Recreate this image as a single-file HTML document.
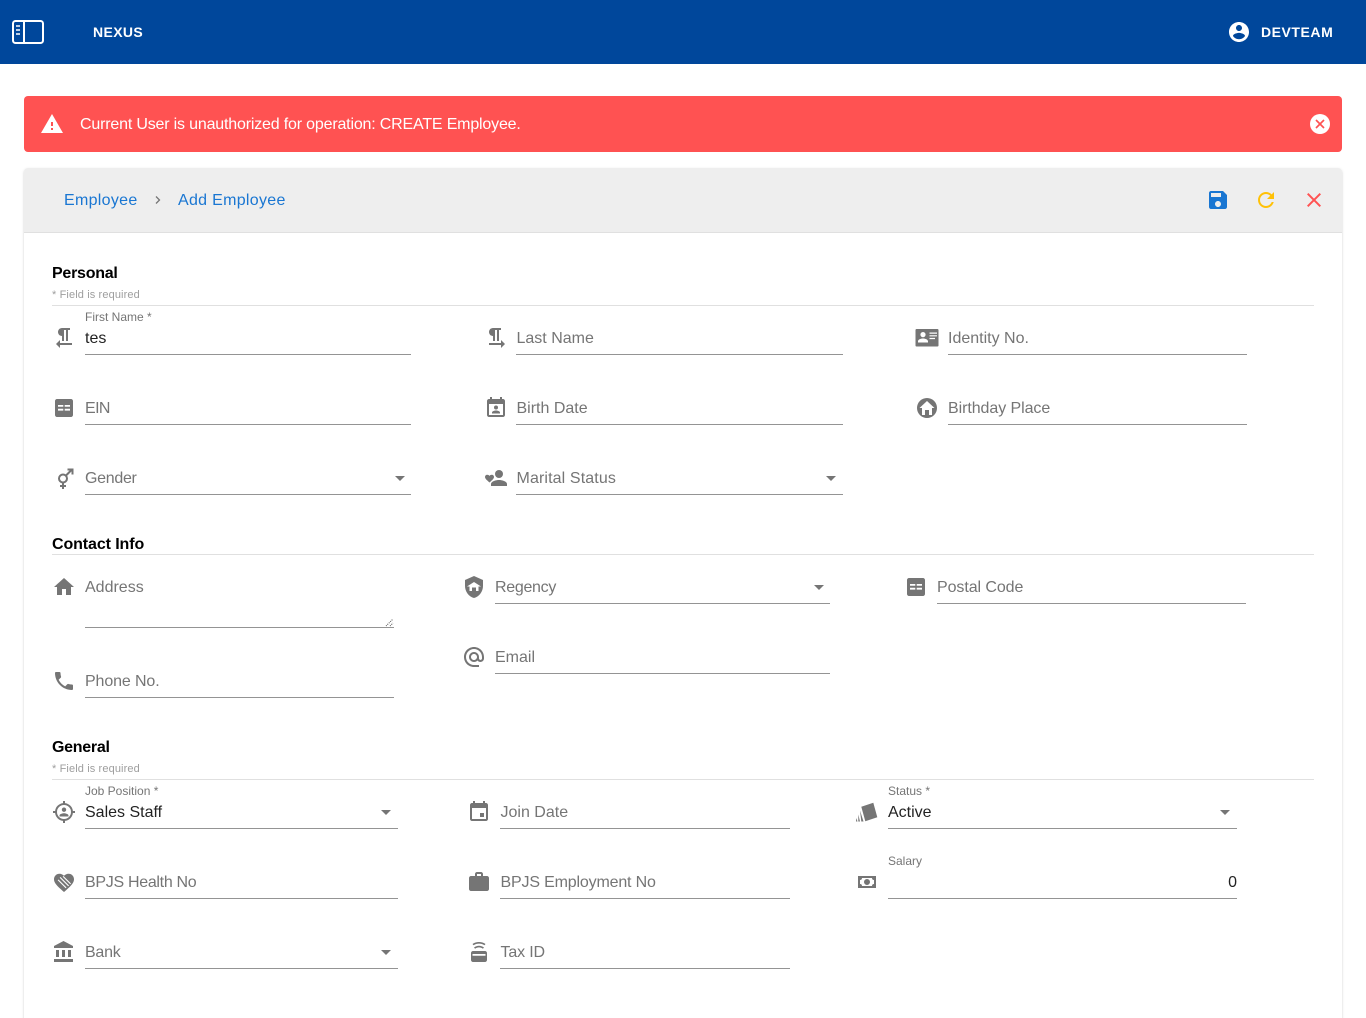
<!DOCTYPE html>
<html><head><meta charset="utf-8"><style>
html,body{margin:0;padding:0;background:#fff}
#p{position:relative;width:1366px;height:1018px;overflow:hidden;font-family:"Liberation Sans",sans-serif;background:#fff}
.t{position:absolute;font-size:16px;line-height:20px;white-space:nowrap;color:#757575}
.v{color:rgba(0,0,0,.87)}
.l{font-size:12px;line-height:14px;color:#757575}
.h{font-weight:bold;color:#000}
.q{font-size:11px;line-height:14px;color:#9e9e9e;letter-spacing:.12px}
.u{position:absolute;height:1px;background:#949494}
.d{position:absolute;left:52px;width:1262px;height:1px;background:#e0e0e0}
.a{position:absolute;width:0;height:0;border-left:5px solid transparent;border-right:5px solid transparent;border-top:5px solid #757575}
svg.i{position:absolute;width:24px;height:24px;fill:#757575}
</style></head><body><div id="p">
<div style="position:absolute;left:0;top:0;width:1366px;height:64px;background:#00479b"></div>
<svg style="position:absolute;left:12px;top:20px" width="32" height="24" viewBox="0 0 32 24" fill="none" stroke="#fff" stroke-width="2"><rect x="1" y="1" width="30" height="22" rx="2.500"/><path d="M12 1v22"/><path d="M4 6h4M4 10h4M4 14h4" stroke-width="1.500"/></svg>
<div class="t" style="left:93px;top:22px;font-size:14px;font-weight:bold;color:#fff;letter-spacing:.38px">NEXUS</div>
<svg class="i" style="left:1227px;top:20px;fill:#fff" viewBox="0 0 24 24"><path d="M12 2C6.480 2 2 6.480 2 12s4.480 10 10 10 10-4.480 10-10S17.520 2 12 2zm0 3c1.660 0 3 1.340 3 3s-1.340 3-3 3-3-1.340-3-3 1.340-3 3-3zm0 14.200c-2.500 0-4.710-1.280-6-3.220.03-1.990 4-3.080 6-3.080 1.990 0 5.970 1.090 6 3.080-1.290 1.940-3.500 3.220-6 3.220z"/></svg>
<div class="t" style="left:1261px;top:22px;font-size:14px;font-weight:bold;color:#fff;letter-spacing:.55px">DEVTEAM</div>

<div style="position:absolute;left:24px;top:96px;width:1318px;height:56px;background:#ff5252;border-radius:4px"></div>
<svg class="i" style="left:40px;top:112px;fill:#fff" viewBox="0 0 24 24"><path d="M1 21h22L12 2 1 21zm12-3h-2v-2h2v2zm0-4h-2v-4h2v4z"/></svg>
<div class="t" style="left:80px;top:115px;color:#fff;letter-spacing:-.18px">Current User is unauthorized for operation: CREATE Employee.</div>
<svg class="i" style="left:1308px;top:112px" viewBox="0 0 24 24"><circle cx="12" cy="12" r="10" fill="#fff"/><path d="M8 8l8 8M16 8l-8 8" stroke="#ff5252" stroke-width="1.700" fill="none"/></svg>

<div style="position:absolute;left:24px;top:168px;width:1318px;height:860px;background:#fff;border-radius:4px;box-shadow:0 2px 1px -1px rgba(0,0,0,.2),0 1px 1px 0 rgba(0,0,0,.14),0 1px 3px 0 rgba(0,0,0,.12)"></div>
<div style="position:absolute;left:24px;top:168px;width:1318px;height:64px;background:#eee;border-radius:4px 4px 0 0;border-bottom:1px solid #e0e0e0"></div>
<div class="t" style="left:64px;top:191px;color:#1976d2;letter-spacing:.3px">Employee</div>
<svg style="position:absolute;left:153px;top:195px" width="10" height="10" viewBox="0 0 10 10" fill="none" stroke="#757575" stroke-width="1.300"><path d="M3 1.500L6.500 5 3 8.500"/></svg>
<div class="t" style="left:178px;top:191px;color:#1976d2;letter-spacing:.3px">Add Employee</div>
<svg class="i" style="left:1206px;top:188px;fill:#1976d2" viewBox="0 0 24 24"><path d="M17 3H5c-1.110 0-2 .9-2 2v14c0 1.100.89 2 2 2h14c1.100 0 2-.9 2-2V7l-4-4zm-5 16c-1.660 0-3-1.340-3-3s1.340-3 3-3 3 1.340 3 3-1.340 3-3 3zm3-10H5V5h10v4z"/></svg>
<svg class="i" style="left:1254px;top:188px;fill:#ffc107" viewBox="0 0 24 24"><path d="M17.650 6.350C16.200 4.900 14.210 4 12 4c-4.420 0-7.990 3.580-7.990 8s3.570 8 7.990 8c3.730 0 6.840-2.550 7.730-6h-2.080c-.82 2.330-3.040 4-5.650 4-3.310 0-6-2.690-6-6s2.690-6 6-6c1.660 0 3.140.69 4.220 1.780L13 11h7V4l-2.350 2.350z"/></svg>
<svg class="i" style="left:1302px;top:188px;fill:#ff5252" viewBox="0 0 24 24"><path d="M19 6.410L17.590 5 12 10.590 6.410 5 5 6.410 10.590 12 5 17.590 6.410 19 12 13.410 17.590 19 19 17.590 13.410 12z"/></svg>

<div class="t h" style="left:52px;top:264px;letter-spacing:-.25px">Personal</div>
<div class="t q" style="left:52px;top:288px">* Field is required</div>
<div class="d" style="top:305px"></div>

<svg class="i" style="left:52px;top:326px" viewBox="0 0 24 24"><path d="M10 10v5h2V4h2v11h2V4h2V2h-8C7.790 2 6 3.790 6 6s1.790 4 4 4zm-2 7v-3l-4 4 4 4v-3h12v-2H8z"/></svg>
<div class="t l" style="left:85px;top:310px">First Name *</div>
<div class="t v" style="left:85px;top:329px">tes</div>
<div class="u" style="left:85px;top:354px;width:326px"></div>

<svg class="i" style="left:483.500px;top:326px" viewBox="0 0 24 24"><path d="M9 10v5h2V4h2v11h2V4h2V2H9C6.790 2 5 3.790 5 6s1.790 4 4 4zm12 8l-4-4v3H5v2h12v3l4-4z"/></svg>
<div class="t" style="left:516.500px;top:329px">Last Name</div>
<div class="u" style="left:516px;top:354px;width:327px"></div>

<svg class="i" style="left:915px;top:326px;width:24px" viewBox="0 0 24 24"><path fill-rule="evenodd" d="M1.500 3h21c.6 0 1 .5 1 1v15.500c0 .6-.4 1-1 1h-21c-.6 0-1-.4-1-1V4c0-.5.4-1 1-1zM8 6a2.600 2.600 0 1 0 0 5.200A2.600 2.600 0 0 0 8 6zm-5 10.500h10v-1.300c0-1.800-3.300-2.700-5-2.700s-5 .9-5 2.700zM14.500 6.500v1.200H22V6.500zm0 2.700v1.200H22V9.200zm0 2.700v1.200H20v-1.200z"/></svg>
<div class="t" style="left:948px;top:329px">Identity No.</div>
<div class="u" style="left:948px;top:354px;width:299px"></div>

<svg class="i" style="left:52px;top:396px" viewBox="0 0 24 24"><path fill-rule="evenodd" d="M5 3h14c1.100 0 2 .9 2 2v14c0 1.100-.9 2-2 2H5c-1.100 0-2-.9-2-2V5c0-1.100.9-2 2-2zm1 6v1.800h5.300V9zm6.700 0v1.800H18V9zM6 12.800v1.800h5.300v-1.800zm6.700 0v1.800H18v-1.800z"/></svg>
<div class="t" style="left:85px;top:399px;letter-spacing:-.6px">EIN</div>
<div class="u" style="left:85px;top:424px;width:326px"></div>

<svg class="i" style="left:483.500px;top:396px" viewBox="0 0 24 24"><path d="M19 3h-1V1h-2v2H8V1H6v2H5c-1.110 0-2 .9-2 2v14c0 1.100.89 2 2 2h14c1.100 0 2-.9 2-2V5c0-1.100-.9-2-2-2zm0 16H5V8h14zM12 9.500a2 2 0 1 1 0 4 2 2 0 0 1 0-4zM8 17.500v-1c0-1.300 2.700-2 4-2s4 .7 4 2v1z"/></svg>
<div class="t" style="left:516.500px;top:399px">Birth Date</div>
<div class="u" style="left:516px;top:424px;width:327px"></div>

<svg class="i" style="left:915px;top:396px" viewBox="0 0 24 24"><path fill-rule="evenodd" d="M12 2a10 10 0 1 1 0 20 10 10 0 0 1 0-20zm-2 17v-5h4v5h3v-7h2.500L12 5 4.500 12H7v7z"/></svg>
<div class="t" style="left:948px;top:399px;letter-spacing:-.07px">Birthday Place</div>
<div class="u" style="left:948px;top:424px;width:299px"></div>

<svg class="i" style="left:52px;top:466px;fill:none;stroke:#757575;stroke-width:2" viewBox="0 0 24 24"><circle cx="11" cy="12.500" r="4"/><path d="M11 16.500V23M8 20h6M14 9.500L20 3.500M15.500 3.500H20.500V8.500"/></svg>
<div class="t" style="left:85px;top:469px;letter-spacing:-.3px">Gender</div>
<div class="a" style="left:395px;top:476px"></div>
<div class="u" style="left:85px;top:494px;width:326px"></div>

<svg class="i" style="left:483.500px;top:466px" viewBox="0 0 24 24"><circle cx="15" cy="8" r="4"/><path d="M7 20v-2c0-2.700 5.300-4 8-4s8 1.300 8 4v2zM5.500 16.500l-.9-.8C2.600 13.900 1 12.500 1 11c0-1.300 1-2.200 2.200-2.200.9 0 1.700.4 2.300 1.100.6-.7 1.400-1.100 2.300-1.100C9 8.800 10 9.700 10 11c0 1.500-1.600 2.900-3.600 4.700z"/></svg>
<div class="t" style="left:516.500px;top:469px;letter-spacing:.12px">Marital Status</div>
<div class="a" style="left:826px;top:476px"></div>
<div class="u" style="left:516px;top:494px;width:327px"></div>

<div class="t h" style="left:52px;top:535px;letter-spacing:-.1px">Contact Info</div>
<div class="d" style="top:554px"></div>

<svg class="i" style="left:52px;top:575px" viewBox="0 0 24 24"><path d="M10 20v-6h4v6h5v-8h3L12 3 2 12h3v8z"/></svg>
<div class="t" style="left:85px;top:578px">Address</div>
<div class="u" style="left:85px;top:627px;width:309px"></div>
<svg style="position:absolute;left:385px;top:618px" width="9" height="9" viewBox="0 0 9 9" fill="none" stroke="#555" stroke-width="1" stroke-dasharray="1 1"><path d="M1 8L8 1M5 8L8 5"/></svg>

<svg class="i" style="left:462px;top:575px" viewBox="0 0 24 24"><path fill-rule="evenodd" d="M12 1L3 5v6c0 5.550 3.840 10.740 9 12 5.160-1.260 9-6.450 9-12V5zm-2 15v-3.500h4V16h2.500v-4.500H19L12 7l-7 4.500h2.500V16z"/></svg>
<div class="t" style="left:495px;top:578px;letter-spacing:-.3px">Regency</div>
<div class="a" style="left:814px;top:585px"></div>
<div class="u" style="left:495px;top:603px;width:335px"></div>

<svg class="i" style="left:904px;top:575px" viewBox="0 0 24 24"><path fill-rule="evenodd" d="M5 3h14c1.100 0 2 .9 2 2v14c0 1.100-.9 2-2 2H5c-1.100 0-2-.9-2-2V5c0-1.100.9-2 2-2zm1 6v1.800h5.300V9zm6.700 0v1.800H18V9zM6 12.800v1.800h5.300v-1.800zm6.700 0v1.800H18v-1.800z"/></svg>
<div class="t" style="left:937px;top:578px;letter-spacing:-.08px">Postal Code</div>
<div class="u" style="left:937px;top:603px;width:309px"></div>

<svg class="i" style="left:462px;top:645px" viewBox="0 0 24 24"><path d="M12 2C6.480 2 2 6.480 2 12s4.480 10 10 10h5v-2h-5c-4.340 0-8-3.660-8-8s3.660-8 8-8 8 3.660 8 8v1.430c0 .79-.71 1.570-1.500 1.570s-1.500-.78-1.500-1.570V12c0-2.760-2.240-5-5-5s-5 2.240-5 5 2.240 5 5 5c1.380 0 2.640-.56 3.540-1.470.65.89 1.770 1.470 2.960 1.470 1.970 0 3.500-1.600 3.500-3.570V12c0-5.520-4.480-10-10-10zm0 13c-1.660 0-3-1.340-3-3s1.340-3 3-3 3 1.340 3 3-1.340 3-3 3z"/></svg>
<div class="t" style="left:495px;top:648px">Email</div>
<div class="u" style="left:495px;top:673px;width:335px"></div>

<svg class="i" style="left:52px;top:669px" viewBox="0 0 24 24"><path d="M6.620 10.790c1.440 2.830 3.760 5.140 6.590 6.590l2.200-2.200c.27-.27.67-.36 1.020-.24 1.120.37 2.330.57 3.570.57.55 0 1 .45 1 1V20c0 .55-.45 1-1 1-9.390 0-17-7.610-17-17 0-.55.45-1 1-1h3.500c.55 0 1 .45 1 1 0 1.250.2 2.450.57 3.570.11.35.03.74-.25 1.020l-2.200 2.200z"/></svg>
<div class="t" style="left:85px;top:672px;letter-spacing:-.12px">Phone No.</div>
<div class="u" style="left:85px;top:697px;width:309px"></div>

<div class="t h" style="left:52px;top:738px;letter-spacing:-.28px">General</div>
<div class="t q" style="left:52px;top:762px">* Field is required</div>
<div class="d" style="top:779px"></div>

<svg class="i" style="left:52px;top:800px" viewBox="0 0 24 24"><path fill-rule="evenodd" d="M11 1h2v2.100A9 9 0 0 1 20.900 11H23v2h-2.100A9 9 0 0 1 13 20.900V23h-2v-2.100A9 9 0 0 1 3.100 13H1v-2h2.100A9 9 0 0 1 11 3.100zm1 4a7 7 0 1 0 0 14 7 7 0 0 0 0-14zm0 2.500a2.200 2.200 0 1 1 0 4.400 2.200 2.200 0 0 1 0-4.400zM7.500 16.500v-1c0-1.500 3-2.300 4.500-2.300s4.500.8 4.500 2.300v1z"/></svg>
<div class="t l" style="left:85px;top:784px">Job Position *</div>
<div class="t v" style="left:85px;top:803px">Sales Staff</div>
<div class="a" style="left:381px;top:810px"></div>
<div class="u" style="left:85px;top:828px;width:313px"></div>

<svg class="i" style="left:467px;top:800px" viewBox="0 0 24 24"><path d="M17 13h-4v4h4zM16 1v2H8V1H6v2H5c-1.110 0-2 .9-2 2v14c0 1.100.89 2 2 2h14c1.100 0 2-.9 2-2V5c0-1.100-.9-2-2-2h-1V1zm3 18H5V8h14z"/></svg>
<div class="t" style="left:500.500px;top:803px">Join Date</div>
<div class="u" style="left:500px;top:828px;width:290px"></div>

<svg class="i" style="left:855px;top:800px" viewBox="0 0 24 24"><path d="M6.300 6.700L18.300 2.700 22.300 17.300 10.300 21.300zM5 10.500L8.500 21.500H6.300zM3.300 14.500L5 21.500H3.300zM1.300 18l1.200 3.500H1z"/></svg>
<div class="t l" style="left:888px;top:784px">Status *</div>
<div class="t v" style="left:888px;top:803px">Active</div>
<div class="a" style="left:1220px;top:810px"></div>
<div class="u" style="left:888px;top:828px;width:349px"></div>

<svg class="i" style="left:52px;top:870px" viewBox="0 0 24 24"><path fill-rule="evenodd" d="M12 22l-1.500-1.300C5.400 16.100 2 13 2 9.200 2 6.100 4.400 3.700 7.500 3.700c1.700 0 3.400.8 4.500 2.100 1.100-1.300 2.800-2.100 4.500-2.100 3.100 0 5.500 2.400 5.500 5.500 0 3.800-3.400 6.900-8.500 11.500zM8.500 7l-.8.8 8.500 8.500.8-.8zM6.500 9.500l-.8.8 8 8 .8-.8zM11.500 6l-.8.8 7.500 7.500.8-.8z"/></svg>
<div class="t" style="left:85px;top:873px;letter-spacing:-.3px">BPJS Health No</div>
<div class="u" style="left:85px;top:898px;width:313px"></div>

<svg class="i" style="left:467px;top:870px" viewBox="0 0 24 24"><path d="M20 6h-4V4c0-1.110-.89-2-2-2h-4c-1.110 0-2 .89-2 2v2H4c-1.110 0-1.990.89-1.990 2L2 19c0 1.110.89 2 2 2h16c1.110 0 2-.89 2-2V8c0-1.110-.89-2-2-2zm-6 0h-4V4h4v2z"/></svg>
<div class="t" style="left:500.500px;top:873px;letter-spacing:-.17px">BPJS Employment No</div>
<div class="u" style="left:500px;top:898px;width:290px"></div>

<svg class="i" style="left:855px;top:870px" viewBox="0 0 24 24"><path d="M3 6h18v12H3V6m9 3a3 3 0 0 1 3 3 3 3 0 0 1-3 3 3 3 0 0 1-3-3 3 3 0 0 1 3-3M7 8a2 2 0 0 1-2 2v4a2 2 0 0 1 2 2h10a2 2 0 0 1 2-2v-4a2 2 0 0 1-2-2H7z"/></svg>
<div class="t l" style="left:888px;top:854px">Salary</div>
<div class="t v" style="right:129px;top:873px">0</div>
<div class="u" style="left:888px;top:898px;width:349px"></div>

<svg class="i" style="left:52px;top:940px" viewBox="0 0 24 24"><path d="M4 10v7h3v-7H4zm6 0v7h3v-7h-3zM2 22h19v-3H2v3zm14-12v7h3v-7h-3zm-4.500-9L2 6v2h19V6l-9.500-5z"/></svg>
<div class="t" style="left:85px;top:943px;letter-spacing:-.25px">Bank</div>
<div class="a" style="left:381px;top:950px"></div>
<div class="u" style="left:85px;top:968px;width:313px"></div>

<svg class="i" style="left:467px;top:940px" viewBox="0 0 24 24"><path fill-rule="evenodd" d="M6 11h12c1.100 0 2 .9 2 2v7c0 1.100-.9 2-2 2H6c-1.100 0-2-.9-2-2v-7c0-1.100.9-2 2-2zm-.5 3v1.800h13V14zM7 7.500C8.500 6.300 10.200 5.700 12 5.700s3.500.6 5 1.800l-1.100 1.300c-1.100-.9-2.500-1.400-3.900-1.400s-2.800.5-3.900 1.400zM5.500 4C7.300 2.700 9.600 2 12 2s4.700.7 6.500 2l-1 1.300C16 4.200 14 3.600 12 3.600s-4 .6-5.500 1.700z"/></svg>
<div class="t" style="left:500.500px;top:943px;letter-spacing:-.15px">Tax ID</div>
<div class="u" style="left:500px;top:968px;width:290px"></div>
</div></body></html>
